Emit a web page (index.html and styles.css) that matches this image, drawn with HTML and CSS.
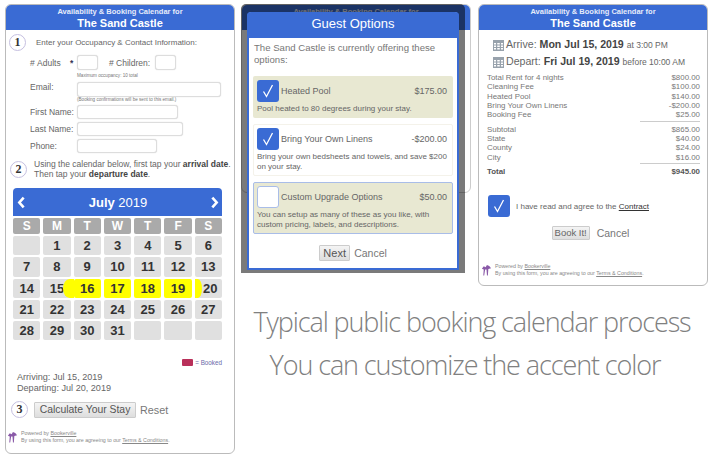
FILE: index.html
```html
<!DOCTYPE html>
<html lang="en">
<head>
    <meta charset="UTF-8">
    <title>Booking Calendar Process</title>
    <link rel="stylesheet" href="styles.css">
</head>
<body>
    <div class="page">
        <!-- Step one: the form and calendar -->
        <div class="card card-form">
            <div class="card-head">
                <div class="head-small">Availability &amp; Booking Calendar for</div>
                <div class="head-big">The Sand Castle</div>
            </div>
            <div class="step-row step-one">
                <span class="step">1</span>
                <span>Enter your Occupancy &amp; Contact Information:</span>
            </div>
            <div class="field field-adults">
                <label>#&nbsp;Adults</label>
                <span class="star">*</span>
                <span class="input w-small"></span>
                <label class="children">#&nbsp;Children:</label>
                <span class="input w-small"></span>
            </div>
            <div class="note note-max">Maximum occupancy: 10 total</div>
            <div class="field field-email">
                <label>Email:</label>
                <span class="input w-email"></span>
            </div>
            <div class="note note-email">(Booking confirmations will be sent to this email.)</div>
            <div class="field field-first">
                <label>First Name:</label>
                <span class="input input-short w-first"></span>
            </div>
            <div class="field field-next">
                <label>Last Name:</label>
                <span class="input input-short w-last"></span>
            </div>
            <div class="field field-next">
                <label>Phone:</label>
                <span class="input input-short w-phone"></span>
            </div>
            <div class="step-row step-two">
                <span class="step">2</span>
                <span>Using the calendar below, first tap your <b>arrival date</b>.<br>Then tap your <b>departure date</b>.</span>
            </div>

            <div class="cal-head">
                <svg class="chev" viewBox="0 0 8 12"><path d="M6 1.500 2 6l4 4.500" /></svg>
                <span><b>July</b> 2019</span>
                <svg class="chev" viewBox="0 0 8 12"><path d="M2 1.500 6 6l-4 4.500" /></svg>
            </div>
            <div class="cal-grid">
                <div class="dow">S</div><div class="dow">M</div><div class="dow">T</div><div class="dow">W</div><div class="dow">T</div><div class="dow">F</div><div class="dow">S</div>
                <div class="day"></div><div class="day">1</div><div class="day">2</div><div class="day">3</div><div class="day">4</div><div class="day">5</div><div class="day">6</div>
                <div class="day">7</div><div class="day">8</div><div class="day">9</div><div class="day">10</div><div class="day">11</div><div class="day">12</div><div class="day">13</div>
                <div class="day">14</div><div class="day arrive"><span>15</span></div><div class="day sel">16</div><div class="day sel">17</div><div class="day sel">18</div><div class="day sel">19</div><div class="day depart"><span>20</span></div>
                <div class="day">21</div><div class="day">22</div><div class="day">23</div><div class="day">24</div><div class="day">25</div><div class="day">26</div><div class="day">27</div>
                <div class="day">28</div><div class="day">29</div><div class="day">30</div><div class="day">31</div><div class="day"></div><div class="day"></div><div class="day"></div>
            </div>
            <div class="legend"><span class="swatch"></span>= Booked</div>
            <div class="dates">Arriving: Jul 15, 2019<br>Departing: Jul 20, 2019</div>
            <div class="step-row step-three">
                <span class="step">3</span>
                <span class="btn btn-calc">Calculate Your Stay</span>
                <span class="link-plain">Reset</span>
            </div>
            <div class="powered powered-form">
                <svg class="logo" viewBox="0 0 12 13"><path d="M1 5 3 2.500 5 3.500 6.500 1 9 2 11 4.500 8 5.500 7.500 12.500 6.500 12.500 6 6 4.500 6 3.500 12.500 2.500 12.500 3 6Z" /></svg>
                <div>Powered by <u>Bookerville</u><br>By using this form, you are agreeing to our <u>Terms &amp; Conditions</u>.</div>
            </div>
        </div>

        <div class="right-side">
            <div class="shots">
                <!-- Step two: options dialog over the dimmed page -->
                <div class="modal-shot">
                    <div class="card card-behind">
                        <div class="card-head">
                            <div class="head-small">Availability &amp; Booking Calendar for</div>
                        </div>
                    </div>
                    <div class="dim"></div>
                    <div class="modal">
                        <div class="modal-head">Guest Options</div>
                        <p class="modal-intro">The Sand Castle is currently offering these options:</p>
                        <div class="option option-on option-first">
                            <div class="option-top">
                                <span class="check"><svg viewBox="0 0 22 22"><path d="M6.500 11.500 9.500 16.500 15.500 5" /></svg></span>
                                <span class="option-name">Heated Pool</span>
                                <span>$175.00</span>
                            </div>
                            <div class="option-desc">Pool heated to 80 degrees during your stay.</div>
                        </div>
                        <div class="option option-plain">
                            <div class="option-top">
                                <span class="check"><svg viewBox="0 0 22 22"><path d="M6.500 11.500 9.500 16.500 15.500 5" /></svg></span>
                                <span class="option-name">Bring Your Own Linens</span>
                                <span>-$200.00</span>
                            </div>
                            <div class="option-desc">Bring your own bedsheets and towels, and save $200 on your stay.</div>
                        </div>
                        <div class="option option-on option-focus">
                            <div class="option-top">
                                <span class="check check-off"></span>
                                <span class="option-name">Custom Upgrade Options</span>
                                <span>$50.00</span>
                            </div>
                            <div class="option-desc">You can setup as many of these as you like, with custom pricing, labels, and descriptions.</div>
                        </div>
                        <div class="modal-actions">
                            <span class="btn btn-next">Next</span>
                            <span class="link-plain">Cancel</span>
                        </div>
                    </div>
                </div>

                <!-- Step three: the quote -->
                <div class="card card-quote">
                    <div class="card-head">
                        <div class="head-small">Availability &amp; Booking Calendar for</div>
                        <div class="head-big">The Sand Castle</div>
                    </div>
                    <div class="when when-first">
                        <svg class="cal-icon" viewBox="0 0 11 12"><path d="M0 1h11v11H0zM1 4v1.500h2V4zM4.250 4v1.500h2.500V4zM8 4v1.500h2V4zM1 6.500V8h2V6.500zM4.250 6.500V8h2.500V6.500zM8 6.500V8h2V6.500zM1 9v1.500h2V9zM4.250 9v1.500h2.500V9zM8 9v1.500h2V9z" /></svg>
                        <span>Arrive: <b>Mon Jul 15, 2019</b> <small>at 3:00 PM</small></span>
                    </div>
                    <div class="when">
                        <svg class="cal-icon" viewBox="0 0 11 12"><path d="M0 1h11v11H0zM1 4v1.500h2V4zM4.250 4v1.500h2.500V4zM8 4v1.500h2V4zM1 6.500V8h2V6.500zM4.250 6.500V8h2.500V6.500zM8 6.500V8h2V6.500zM1 9v1.500h2V9zM4.250 9v1.500h2.500V9zM8 9v1.500h2V9z" /></svg>
                        <span>Depart: <b>Fri Jul 19, 2019</b> <small>before 10:00 AM</small></span>
                    </div>
                    <div class="bill">
                        <div class="bill-row"><span>Total Rent for 4 nights</span><span>$800.00</span></div>
                        <div class="bill-row"><span>Cleaning Fee</span><span>$100.00</span></div>
                        <div class="bill-row"><span>Heated Pool</span><span>$140.00</span></div>
                        <div class="bill-row"><span>Bring Your Own Linens</span><span>-$200.00</span></div>
                        <div class="bill-row"><span>Booking Fee</span><span>$25.00</span></div>
                        <div class="bill-rule"></div>
                        <div class="bill-row"><span>Subtotal</span><span>$865.00</span></div>
                        <div class="bill-row"><span>State</span><span>$40.00</span></div>
                        <div class="bill-row"><span>County</span><span>$24.00</span></div>
                        <div class="bill-row"><span>City</span><span>$16.00</span></div>
                        <div class="bill-rule"></div>
                        <div class="bill-row bill-total"><span>Total</span><span>$945.00</span></div>
                    </div>
                    <div class="agree">
                        <span class="check"><svg viewBox="0 0 22 22"><path d="M6.500 11.500 9.500 16.500 15.500 5" /></svg></span>
                        <span>I have read and agree to the <u class="contract">Contract</u></span>
                    </div>
                    <div class="book-actions">
                        <span class="btn btn-book">Book It!</span>
                        <span class="link-plain">Cancel</span>
                    </div>
                    <div class="powered powered-quote">
                        <svg class="logo" viewBox="0 0 12 13"><path d="M1 5 3 2.500 5 3.500 6.500 1 9 2 11 4.500 8 5.500 7.500 12.500 6.500 12.500 6 6 4.500 6 3.500 12.500 2.500 12.500 3 6Z" /></svg>
                        <div>Powered by <u>Bookerville</u><br>By using this form, you are agreeing to our <u>Terms &amp; Conditions</u>.</div>
                    </div>
                </div>
            </div>
            <div class="caption">
                <div>Typical public booking calendar process</div>
                <div class="caption-second">You can customize the accent color</div>
            </div>
        </div>
    </div>
</body>
</html>
```

FILE: styles.css
```css
body {
    margin: 0;
    font-family: "Liberation Sans", Arial, sans-serif;
    background: #fff;
    color: #555;
    overflow: hidden;
}
.page {
    display: flex;
    align-items: flex-start;
    padding: 4px 0 0 5px;
}
.right-side {
    margin-left: 6px;
}
.shots {
    display: flex;
    align-items: flex-start;
}

/* Cards */
.card {
    box-sizing: border-box;
    width: 230px;
    border: 1px solid #bbb;
    border-radius: 6px;
    background: #fff;
    overflow: hidden;
}
.card-form {
    height: 450px;
}
.card-quote {
    height: 282px;
    margin-left: 7px;
}
.card-head {
    height: 25px;
    background: #3a6bd4;
    color: #fff;
    text-align: center;
    font-weight: bold;
}
.head-small {
    padding-top: 2px;
    font-size: 7.500px;
    line-height: 10px;
    color: #e6ecfa;
}
.head-big {
    font-size: 11px;
    line-height: 12px;
}

/* Form */
.step-row {
    display: flex;
    align-items: center;
    font-size: 8px;
}
.step {
    flex: none;
    box-sizing: border-box;
    width: 17px;
    height: 17px;
    border: 1.500px solid #c5bfe0;
    border-radius: 50%;
    text-align: center;
    font: bold 12px/14px "Liberation Serif", serif;
    color: #333;
}
.step-one {
    padding: 4px 0 0 3px;
    gap: 10px;
    color: #666;
}
.field {
    display: flex;
    align-items: center;
    font-size: 8.500px;
    color: #666;
    padding-left: 24px;
}
.field label {
    width: 47px;
    flex: none;
    white-space: nowrap;
}
.field-adults {
    margin-top: 4px;
}
.field-adults label {
    width: 40px;
}
.field-adults .star {
    width: 7px;
    font-weight: bold;
    color: #335;
}
.field-adults .children {
    width: 46px;
    margin-left: 11px;
}
.input {
    box-sizing: border-box;
    height: 15px;
    border: 1px solid #ddd;
    border-radius: 3px;
    background: #fff;
    box-shadow: 0 0 1px #ccc;
}
.input-short { height: 14px; }
.w-small { width: 21px; }
.w-email { width: 144px; }
.w-first { width: 101px; }
.w-last { width: 106px; }
.w-phone { width: 80px; }
.note {
    padding-left: 71px;
    font-size: 4.600px;
    line-height: 6px;
    color: #777;
    white-space: nowrap;
}
.note-max { margin-top: 3px; }
.field-email { margin-top: 3px; align-items: flex-start; }
.note-email { margin-top: 0; }
.field-first { margin-top: 2px; }
.field-next { margin-top: 3px; }
.step-two {
    margin-top: 6px;
    padding-left: 4px;
    gap: 7px;
    font-size: 8.500px;
    line-height: 10px;
    color: #666;
    white-space: nowrap;
}
.step-two b { color: #444; font-weight: bold; }

/* Calendar */
.cal-head {
    display: flex;
    align-items: center;
    justify-content: space-between;
    box-sizing: border-box;
    width: 209px;
    height: 28px;
    margin: 9px 0 0 7px;
    padding: 0 3px 0 4px;
    background: #3a6bd4;
    border-radius: 4px 4px 0 0;
    color: #fff;
    font-size: 13px;
}
.chev {
    width: 9px;
    height: 13px;
    fill: none;
    stroke: #fff;
    stroke-width: 2.400;
}
.cal-grid {
    display: grid;
    grid-template-columns: repeat(7, 1fr);
    grid-template-rows: 16px repeat(5, 19.300px);
    gap: 2px 3px;
    width: 209px;
    margin: 2px 0 0 7px;
}
.dow {
    background: #aaa;
    color: #fff;
    border-radius: 2px;
    text-align: center;
    font-size: 12px;
    font-weight: bold;
    line-height: 16px;
}
.day {
    position: relative;
    background: #e0e0e0;
    border-radius: 2px;
    text-align: center;
    font-size: 13px;
    font-weight: bold;
    line-height: 19px;
    color: #333;
}
.sel {
    background: #ff0;
}
.day span {
    position: relative;
}
.arrive::after,
.depart::before {
    content: "";
    position: absolute;
    top: 0;
    bottom: 0;
    background: #ff0;
}
.arrive::after {
    right: -3px;
    width: 11px;
    border-radius: 60% 0 0 60% / 50% 0 0 50%;
}
.depart::before {
    left: 0;
    width: 7px;
    border-radius: 0 60% 60% 0 / 0 50% 50% 0;
}
.depart span { left: 2px; z-index: 1; }
.legend {
    display: flex;
    justify-content: flex-end;
    align-items: center;
    gap: 2px;
    width: 216px;
    margin-top: 19px;
    font-size: 6.300px;
    color: #6a6aa8;
}
.swatch {
    width: 11px;
    height: 7px;
    background: #b9305a;
    border-radius: 1px;
}
.dates {
    margin: 6px 0 0 11px;
    font-size: 9.100px;
    line-height: 10.500px;
    color: #666;
}
.step-three {
    margin-top: 8px;
    padding-left: 5px;
    gap: 6px;
    font-size: 11.500px;
}
.btn {
    display: inline-block;
    box-sizing: border-box;
    border: 1px solid #ccc;
    border-radius: 1px;
    background: linear-gradient(#f4f4f4, #dedede);
    color: #555;
    text-align: center;
    white-space: nowrap;
}
.btn-calc {
    width: 102px;
    height: 16px;
    font-size: 10.400px;
    line-height: 14px;
}
.link-plain {
    color: #777;
}
.step-three .link-plain {
    margin-left: -2px;
    font-size: 10.800px;
}
.powered {
    display: flex;
    align-items: center;
    gap: 3px;
    font-size: 5.300px;
    line-height: 6.500px;
    color: #888;
    white-space: nowrap;
}
.powered-form {
    margin: 12px 0 0 1px;
}
.logo {
    flex: none;
    width: 11px;
    height: 12px;
    fill: #8a5aa8;
}

/* Dimmed shot with the dialog */
.modal-shot {
    position: relative;
    width: 230px;
    height: 270px;
}
.card-behind {
    height: 189px;
    border-color: #ccc;
}
.dim {
    position: absolute;
    left: 0;
    top: 0;
    width: 224px;
    height: 269px;
    background: rgba(0, 0, 0, .52);
    border-radius: 5px 5px 0 0;
}
.modal {
    position: absolute;
    left: 6px;
    top: 8px;
    box-sizing: border-box;
    width: 212px;
    height: 258px;
    border: 2px solid #3a6bd4;
    border-top: 0;
    border-radius: 4px 4px 0 0;
    background: #fff;
}
.modal-head {
    height: 26px;
    margin: 0 -2px;
    background: #3a6bd4;
    border-radius: 4px 4px 0 0;
    color: #fff;
    text-align: center;
    font-size: 13px;
    line-height: 24px;
}
.modal-intro {
    margin: 4px 4px 0 5px;
    font-size: 9.600px;
    line-height: 12px;
    color: #777;
}
.option {
    box-sizing: border-box;
    margin: 0 4px;
    padding: 4px 4px 0 4px;
    border-radius: 2px;
    color: #666;
    font-size: 9px;
}
.option-on {
    background: #e8e8d2;
}
.option-first {
    height: 42px;
    margin-top: 10px;
}
.option-plain {
    height: 52px;
    margin-top: 6px;
    border: 1px solid #f4f2ea;
    padding: 3px 3px 0 3px;
}
.option-focus {
    height: 52px;
    margin-top: 6px;
    border: 1px solid #a9bde8;
    padding: 3px 3px 0 3px;
}
.option-top {
    display: flex;
    align-items: center;
    padding-right: 2px;
}
.option-name {
    flex: 1;
    margin-left: 2px;
}
.option-desc {
    margin-top: 2px;
    font-size: 8px;
    line-height: 9.500px;
}
.check {
    flex: none;
    box-sizing: border-box;
    display: inline-block;
    width: 22px;
    height: 22px;
    background: #3a6bd4;
    border-radius: 3px;
}
.check svg {
    display: block;
    width: 22px;
    height: 22px;
    fill: none;
    stroke: #fff;
    stroke-width: 1.300;
}
.check-off {
    background: #fff;
    border: 1px solid #a9bde8;
}
.modal-actions {
    display: flex;
    justify-content: center;
    align-items: center;
    gap: 4px;
    margin-top: 11px;
    font-size: 10.500px;
}
.btn-next {
    width: 31px;
    height: 16px;
    line-height: 14px;
    font-size: 11px;
}

/* Quote */
.when {
    display: flex;
    align-items: center;
    gap: 2px;
    padding-left: 14px;
    font-size: 10.600px;
    line-height: 16px;
    color: #666;
    white-space: nowrap;
}
.when b { color: #444; }
.when small { font-size: 8.500px; }
.when-first { margin-top: 6px; }
.cal-icon {
    width: 11px;
    height: 12px;
    fill: #98a2ac;
    fill-rule: evenodd;
}
.bill {
    margin: 3px 7px 0 8px;
    font-size: 7.900px;
    line-height: 9.330px;
    color: #777;
}
.bill-row {
    display: flex;
    justify-content: space-between;
}
.bill-rule {
    width: 60px;
    height: 1px;
    margin: 1px 0 3px auto;
    background: #ccc;
}
.bill-total {
    font-weight: bold;
    color: #555;
}
.agree {
    display: flex;
    align-items: center;
    gap: 6px;
    margin: 19px 0 0 9px;
    font-size: 8px;
    color: #666;
}
.contract { color: #333; }
.book-actions {
    display: flex;
    justify-content: center;
    align-items: center;
    gap: 7px;
    margin: 9px 0 0 -5px;
    font-size: 10.500px;
}
.btn-book {
    width: 38px;
    height: 14px;
    font-size: 9.500px;
    line-height: 12px;
    color: #666;
}
.powered-quote {
    margin: 23px 0 0 2px;
}

/* Caption under the shots */
.caption {
    margin-top: 14px;
    width: 462px;
    text-align: center;
    font-family: "Open Sans", sans-serif;
    font-weight: 300;
    font-size: 27px;
    letter-spacing: -1.100px;
    line-height: 43px;
    color: #808080;
    white-space: nowrap;
}
.caption-second {
    padding-right: 14px;
}
```
